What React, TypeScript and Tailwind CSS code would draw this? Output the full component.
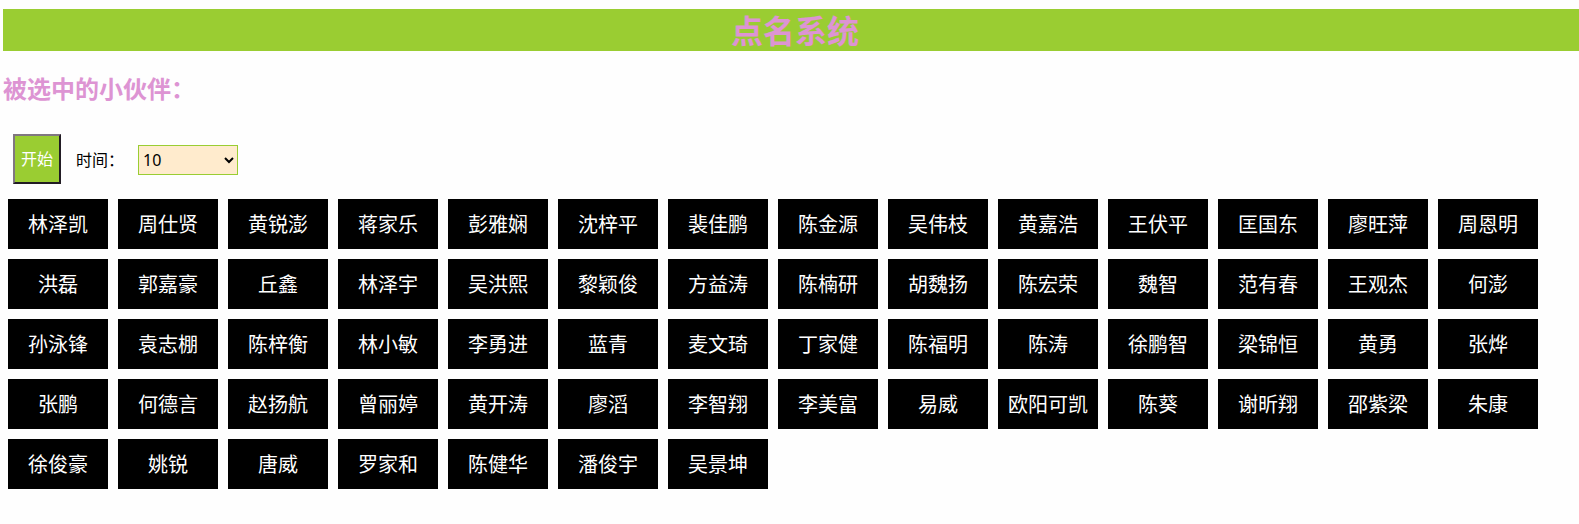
import { useEffect, useState } from "react";

const names = [
  "林泽凯", "周仕贤", "黄锐澎", "蒋家乐", "彭雅娴", "沈梓平", "裴佳鹏", "陈金源", "吴伟枝", "黄嘉浩", "王伏平", "匡国东", "廖旺萍", "周恩明",
  "洪磊", "郭嘉豪", "丘鑫", "林泽宇", "吴洪熙", "黎颖俊", "方益涛", "陈楠研", "胡魏扬", "陈宏荣", "魏智", "范有春", "王观杰", "何澎",
  "孙泳锋", "袁志棚", "陈梓衡", "林小敏", "李勇进", "蓝青", "麦文琦", "丁家健", "陈福明", "陈涛", "徐鹏智", "梁锦恒", "黄勇", "张烨",
  "张鹏", "何德言", "赵扬航", "曾丽婷", "黄开涛", "廖滔", "李智翔", "李美富", "易威", "欧阳可凯", "陈葵", "谢昕翔", "邵紫梁", "朱康",
  "徐俊豪", "姚锐", "唐威", "罗家和", "陈健华", "潘俊宇", "吴景坤",
];

export default function App() {
  const [duration, setDuration] = useState("10");
  const [ticks, setTicks] = useState(0);
  const [active, setActive] = useState<number | null>(null);

  useEffect(() => {
    if (ticks <= 0) return;
    const timer = setTimeout(() => {
      setActive(Math.floor(Math.random() * names.length));
      setTicks(ticks - 1);
    }, 100);
    return () => clearTimeout(timer);
  }, [ticks]);

  return (
    <main className="min-h-screen bg-[#fefefe] pt-[9px] pl-[3px] font-['Noto_Sans','Noto_Sans_CJK_SC',sans-serif] text-black">
      <h1 className="bg-[#9acd32] pt-[2px] pl-2 text-center text-[32px] leading-[40px] font-bold text-[#dd94d3]">
        点名系统
      </h1>
      <h2 className="mt-[22px] text-2xl leading-8 font-bold text-[#dd94d3]">
        被选中的小伙伴：{active !== null && ticks === 0 ? names[active] : ""}
      </h2>
      <div className="mt-[29px] ml-[10px] flex items-center">
        <button
          type="button"
          onClick={() => setTicks(Number(duration) * 10)}
          className="h-[50px] w-12 border-2 border-t-[#807780] border-r-[#221c24] border-b-[#221c24] border-l-[#807780] bg-[#9acd32] text-base text-white"
        >
          开始
        </button>
        <div className="flex items-center pt-[2px]">
          <label htmlFor="duration" className="ml-[15px] w-[62px] text-base">
            时间：
          </label>
          <select
            id="duration"
            value={duration}
            onChange={(e) => setDuration(e.target.value)}
            className="h-[30px] w-[100px] border border-[#9acd32] bg-[#ffebcd] text-base"
          >
            <option value="10">10</option>
            <option value="20">20</option>
            <option value="30">30</option>
          </select>
        </div>
      </div>
      <ul className="mt-[15px] mr-[10px] ml-[5px] flex flex-wrap gap-[10px]">
        {names.map((name, i) => (
          <li
            key={name}
            className={
              i === active
                ? "w-[100px] bg-[#9acd32] pt-[2px] text-center text-xl leading-[48px] text-white"
                : "w-[100px] bg-black pt-[2px] text-center text-xl leading-[48px] text-white"
            }
          >
            {name}
          </li>
        ))}
      </ul>
    </main>
  );
}
